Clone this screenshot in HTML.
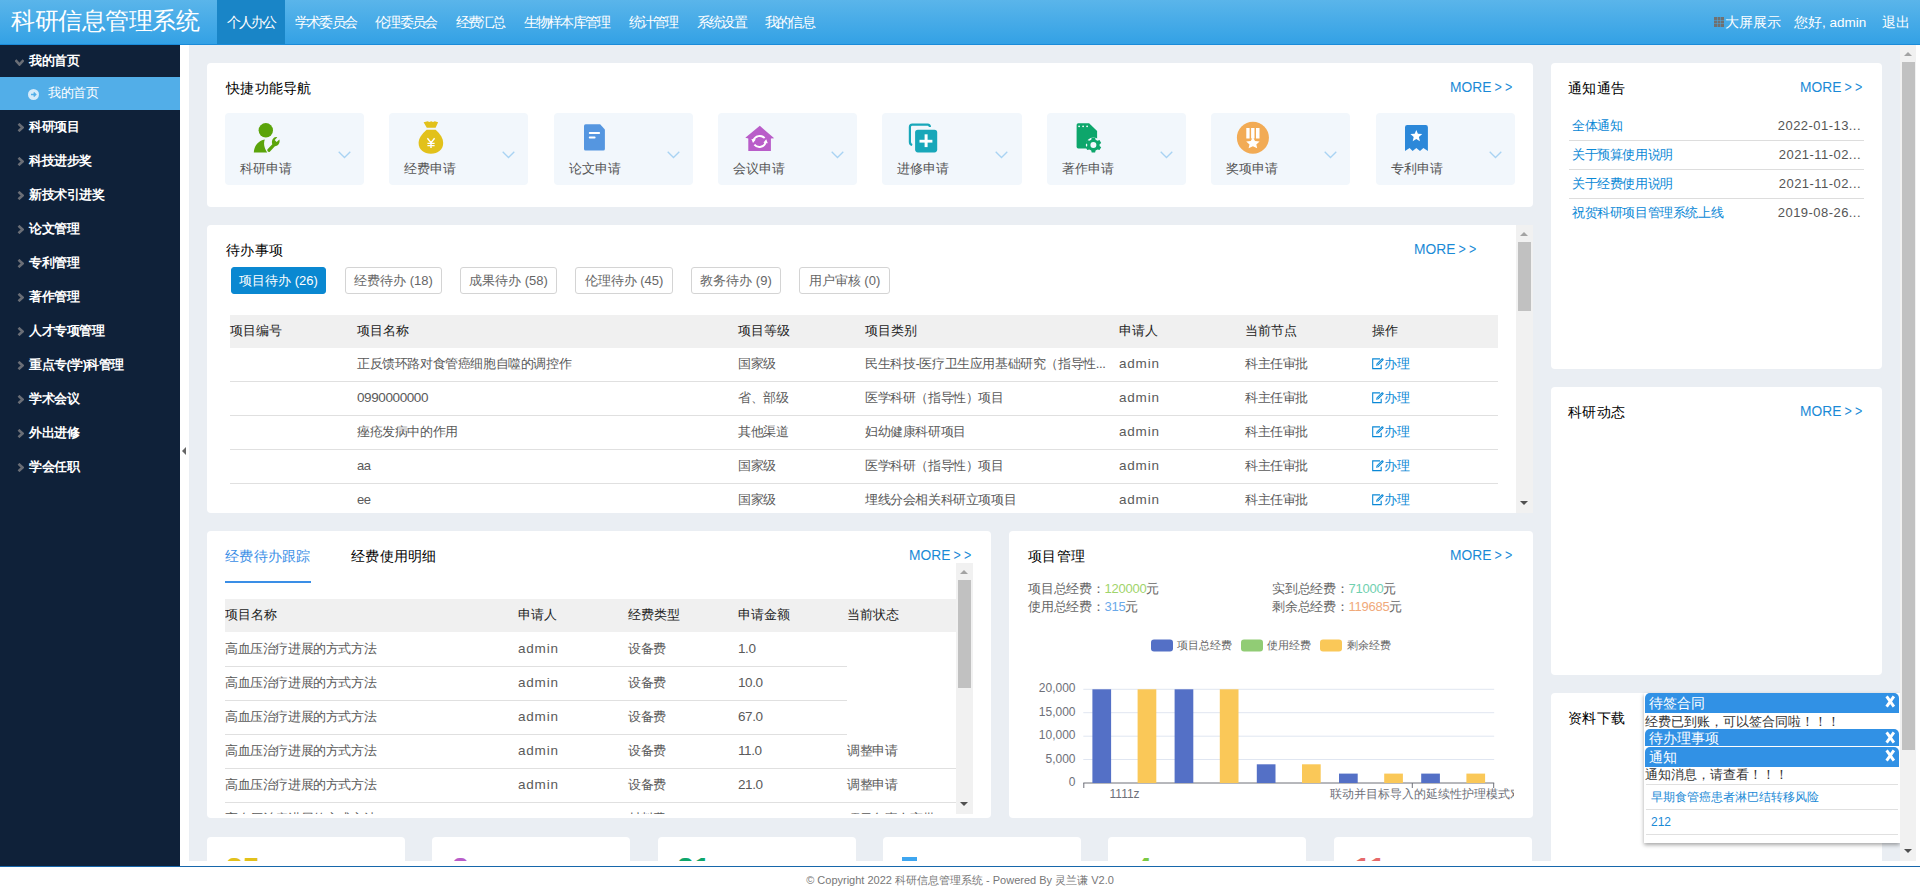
<!DOCTYPE html>
<html><head><meta charset="utf-8"><title>科研信息管理系统</title>
<style>
*{box-sizing:border-box;margin:0;padding:0}
html,body{width:1920px;height:896px;overflow:hidden;background:#fff;font-family:"Liberation Sans",sans-serif;font-size:13px;color:#333}
.abs{position:absolute}
#hd{position:absolute;left:0;top:0;width:1920px;height:45px;background:linear-gradient(#5ab5ea,#33a1e5);border-bottom:1px solid #1a8bd9}
#logo{position:absolute;left:11px;top:4px;font-size:24px;letter-spacing:-0.45px;line-height:34px;color:#fff;white-space:nowrap}
#nav{position:absolute;left:217px;top:0;height:44px;display:flex}
#nav div{height:44px;line-height:45px;padding:0 9.3px 0 9.6px;color:#fff;font-size:14px;letter-spacing:-1.7px;white-space:nowrap}
#nav div.on{background:#1985c7}
.hr{position:absolute;top:1px;height:44px;line-height:44px;color:#fff;font-size:13.5px;white-space:nowrap}
#side{position:absolute;left:0;top:45px;width:180px;height:821px;background:#0f2139}
.mi{position:absolute;left:0;width:180px;height:34px;line-height:34px;color:#fff;font-size:12.5px;letter-spacing:-0.5px;padding-left:29px;white-space:nowrap}
.mi .ar{position:absolute;left:17px;top:13px;width:7px;height:9px}
#main{position:absolute;left:180px;top:45px;width:1740px;height:816px;background:#fff;overflow:hidden}
#bg{position:absolute;left:9px;top:0;width:1711px;height:816px;background:#eaeef3}
.card{position:absolute;background:#fff;border-radius:4px;overflow:hidden}
.ttl{position:absolute;font-size:14px;color:#000;white-space:nowrap;line-height:20px;letter-spacing:0.3px}
.more{position:absolute;font-size:15.5px;color:#1a8ad6;white-space:nowrap;line-height:20px;transform:translateY(-1px) scaleX(0.89);transform-origin:0 0}
.more i{font-style:normal;margin-left:3.6px;font-size:14px}
#foot{position:absolute;left:0;top:866px;width:1920px;height:30px;border-top:1px solid #1767ab;text-align:center;font-size:11px;color:#777;line-height:27px}
.qn{position:absolute;top:113px;width:139.1px;height:72px;background:#f2f7fc;border-radius:4px}
.qi{position:absolute;width:50px;height:45px}
.qi svg{position:absolute;left:0;top:0;overflow:visible}
.qt{position:absolute;top:159px;font-size:13px;line-height:20px;color:#555;white-space:nowrap}
.qc{position:absolute;top:151px}
.btn{position:absolute;top:267px;height:27px;line-height:25px;border:1px solid #d4d4d4;border-radius:3px;color:#666;font-size:13px;text-align:center;white-space:nowrap;background:#fff}
.btn.on{background:#0a88d1;border-color:#0a88d1;color:#fff}
.th{position:absolute;height:33px;background:#f0f0f0}
.tht{position:absolute;font-size:13px;line-height:20px;color:#222;white-space:nowrap}
.td{position:absolute;font-size:13px;line-height:20px;color:#5a5a5a;white-space:nowrap;letter-spacing:-0.4px}
.lk{color:#0a88d6}
.ln{position:absolute;height:1px;background:#e0e0e0}
.sb{position:absolute;background:#f1f1f1}
.sbt{position:absolute;background:#c1c1c1}
.up{position:absolute;width:0;height:0;border-left:4.5px solid transparent;border-right:4.5px solid transparent;border-bottom:4.5px solid #a3a3a3}
.dn{position:absolute;width:0;height:0;border-left:4.5px solid transparent;border-right:4.5px solid transparent;border-top:4.5px solid #505050}
.st{position:absolute;font-size:13px;line-height:18px;color:#666;white-space:nowrap;letter-spacing:-0.25px}
.lg{font-size:11px;fill:#666;font-family:"Liberation Sans",sans-serif}
.ax{font-size:12px;fill:#6e7079;font-family:"Liberation Sans",sans-serif}
.bn{position:absolute;top:853px;font-size:30px;font-weight:bold;line-height:30px}
#pop{position:absolute;left:1644px;top:693px;width:256px;height:150px;background:#fff;box-shadow:0 2px 4px rgba(0,0,0,0.35)}
.ph{position:absolute;left:1px;width:254px;height:20px;background:#3191e5;border-radius:5px 5px 0 0;color:#fff;font-size:14px;line-height:21px;padding-left:4px;white-space:nowrap}
.px{position:absolute;left:240px;top:2.6px;overflow:visible}
.pb{position:absolute;left:1px;font-size:13px;line-height:17px;color:#333;white-space:nowrap}
.pl{position:absolute;left:7px;font-size:12px;line-height:20px;color:#1a8ad6;white-space:nowrap}
.L{font-size:13.5px}
.dt{letter-spacing:0.45px}
</style></head><body>
<div id="hd">
  <div id="logo">科研信息管理系统</div>
  <div id="nav"><div class="on">个人办公</div><div>学术委员会</div><div>伦理委员会</div><div>经费汇总</div><div>生物样本库管理</div><div>统计管理</div><div>系统设置</div><div>我的信息</div></div>
  <svg style="position:absolute;left:1714px;top:17px" width="10" height="10" viewBox="0 0 10 10"><g fill="#707070"><rect x="0" y="0" width="3" height="3"/><rect x="3.5" y="0" width="3" height="3"/><rect x="7" y="0" width="3" height="3"/><rect x="0" y="3.5" width="3" height="3"/><rect x="3.5" y="3.5" width="3" height="3"/><rect x="7" y="3.5" width="3" height="3"/><rect x="0" y="7" width="3" height="3"/><rect x="3.5" y="7" width="3" height="3"/><rect x="7" y="7" width="3" height="3"/></g></svg>
<div class="hr" style="left:1725px">大屏展示</div><div class="hr" style="left:1794px">您好, admin</div><div class="hr" style="left:1882px">退出</div>
</div>
<div id="side">
<div class="mi" style="top:0;height:32px;line-height:32px;font-weight:bold"><svg class="ar" style="left:15px;top:14px;width:9px;height:7px" viewBox="0 0 9 7"><path d="M0.5 1 L4.5 5.5 L8.5 1" fill="none" stroke="#6a6e76" stroke-width="2.6"/></svg>我的首页</div>
<div class="mi" style="top:32px;height:33px;line-height:33px;background:#52aee8;padding-left:48px"><svg style="position:absolute;left:28px;top:12px" width="11" height="11" viewBox="0 0 11 11"><circle cx="5.5" cy="5.5" r="5.5" fill="#d6ebfa"/><path d="M3 5.5 H7.5 M5.7 3.5 L7.7 5.5 L5.7 7.5" fill="none" stroke="#52aee8" stroke-width="1.5"/></svg>我的首页</div>
<div class="mi" style="top:65px;font-weight:bold"><svg class="ar" viewBox="0 0 7 9"><path d="M1.5 0.8 L5.5 4.5 L1.5 8.2" fill="none" stroke="#6a6e76" stroke-width="2.6"/></svg>科研项目</div>
<div class="mi" style="top:99px;font-weight:bold"><svg class="ar" viewBox="0 0 7 9"><path d="M1.5 0.8 L5.5 4.5 L1.5 8.2" fill="none" stroke="#6a6e76" stroke-width="2.6"/></svg>科技进步奖</div>
<div class="mi" style="top:133px;font-weight:bold"><svg class="ar" viewBox="0 0 7 9"><path d="M1.5 0.8 L5.5 4.5 L1.5 8.2" fill="none" stroke="#6a6e76" stroke-width="2.6"/></svg>新技术引进奖</div>
<div class="mi" style="top:167px;font-weight:bold"><svg class="ar" viewBox="0 0 7 9"><path d="M1.5 0.8 L5.5 4.5 L1.5 8.2" fill="none" stroke="#6a6e76" stroke-width="2.6"/></svg>论文管理</div>
<div class="mi" style="top:201px;font-weight:bold"><svg class="ar" viewBox="0 0 7 9"><path d="M1.5 0.8 L5.5 4.5 L1.5 8.2" fill="none" stroke="#6a6e76" stroke-width="2.6"/></svg>专利管理</div>
<div class="mi" style="top:235px;font-weight:bold"><svg class="ar" viewBox="0 0 7 9"><path d="M1.5 0.8 L5.5 4.5 L1.5 8.2" fill="none" stroke="#6a6e76" stroke-width="2.6"/></svg>著作管理</div>
<div class="mi" style="top:269px;font-weight:bold"><svg class="ar" viewBox="0 0 7 9"><path d="M1.5 0.8 L5.5 4.5 L1.5 8.2" fill="none" stroke="#6a6e76" stroke-width="2.6"/></svg>人才专项管理</div>
<div class="mi" style="top:303px;font-weight:bold"><svg class="ar" viewBox="0 0 7 9"><path d="M1.5 0.8 L5.5 4.5 L1.5 8.2" fill="none" stroke="#6a6e76" stroke-width="2.6"/></svg>重点专(学)科管理</div>
<div class="mi" style="top:337px;font-weight:bold"><svg class="ar" viewBox="0 0 7 9"><path d="M1.5 0.8 L5.5 4.5 L1.5 8.2" fill="none" stroke="#6a6e76" stroke-width="2.6"/></svg>学术会议</div>
<div class="mi" style="top:371px;font-weight:bold"><svg class="ar" viewBox="0 0 7 9"><path d="M1.5 0.8 L5.5 4.5 L1.5 8.2" fill="none" stroke="#6a6e76" stroke-width="2.6"/></svg>外出进修</div>
<div class="mi" style="top:405px;font-weight:bold"><svg class="ar" viewBox="0 0 7 9"><path d="M1.5 0.8 L5.5 4.5 L1.5 8.2" fill="none" stroke="#6a6e76" stroke-width="2.6"/></svg>学会任职</div>
</div>
<div id="main"><div id="bg"></div></div>
<div id="clip" style="position:absolute;left:0;top:0;width:1900px;height:861px;overflow:hidden">
<div class="card" style="left:207px;top:63px;width:1326px;height:144px"></div>
<div class="ttl" style="left:226px;top:78px">快捷功能导航</div><div class="more" style="left:1450px;top:78px">MORE<i>&gt;</i><i>&gt;</i></div>
<div class="qn" style="left:225.00px"></div><div class="qi" style="left:245px;top:115px"><svg width="50" height="45" viewBox="0 0 50 45"><circle cx="20.8" cy="15.3" r="7.2" fill="#5ba40b"/><path d="M8.8 37.4 C9.3 30.5 13.5 25.8 19.8 24.6 C18.2 28.6 19.3 33.8 22.2 37.4 Z" fill="#5ba40b"/><path d="M22.3 34.6 L27.3 29.2 C26.2 25.8 27.6 22.4 31.2 21.9 L32.3 22.2 L29.7 25.1 L31.6 27.1 L34.4 24.5 C35.3 28 33.3 31 29.9 31.2 L24.8 36.8 C23.7 37.8 21.9 36.2 22.3 34.6 Z" fill="#5ba40b"/></svg></div><div class="qt" style="left:240.00px">科研申请</div><svg class="qc" style="left:338.00px" width="13" height="8" viewBox="0 0 13 8"><path d="M0.7 0.7 L6.5 6.5 L12.3 0.7" fill="none" stroke="#a9d3f3" stroke-width="1.3"/></svg>
<div class="qn" style="left:389.37px"></div><div class="qi" style="left:405px;top:115px"><svg width="50" height="45" viewBox="0 0 50 45"><path d="M18.6 7.3 L20.8 6.8 L22.6 6.2 L24.4 6.9 L26.2 6.2 L28 6.9 L29.8 6.2 L31.4 6.8 L33.1 7.3 L30.6 12.8 L21.8 12.8 Z" fill="#e2c11b"/><path d="M21.6 14.8 L30.6 14.8 C35.5 19.2 38.2 23.5 38.2 28 C38.2 34.5 33 38.7 25.9 38.7 C18.8 38.7 13.6 34.5 13.6 28 C13.6 23.5 16.7 19.2 21.6 14.8 Z" fill="#e2c11b"/><path d="M22.4 23.2 L26 27.6 L29.6 23.2 M26 27.6 V33 M22.4 28.4 H29.6 M22.4 30.6 H29.6" fill="none" stroke="#fff" stroke-width="1.4"/></svg></div><div class="qt" style="left:404.37px">经费申请</div><svg class="qc" style="left:502.37px" width="13" height="8" viewBox="0 0 13 8"><path d="M0.7 0.7 L6.5 6.5 L12.3 0.7" fill="none" stroke="#a9d3f3" stroke-width="1.3"/></svg>
<div class="qn" style="left:553.74px"></div><div class="qi" style="left:570px;top:115px"><svg width="50" height="45" viewBox="0 0 50 45"><path d="M15.6 9.2 L30.1 9.2 L34.9 14.4 L34.9 34 Q34.9 35.6 33.3 35.6 L15.6 35.6 Q14 35.6 14 34 L14 10.8 Q14 9.2 15.6 9.2 Z" fill="#5596e0"/><rect x="18.8" y="17" width="11.3" height="1.9" rx="0.9" fill="#fff"/><rect x="18.8" y="21.6" width="6.8" height="1.9" rx="0.9" fill="#fff"/></svg></div><div class="qt" style="left:568.74px">论文申请</div><svg class="qc" style="left:666.74px" width="13" height="8" viewBox="0 0 13 8"><path d="M0.7 0.7 L6.5 6.5 L12.3 0.7" fill="none" stroke="#a9d3f3" stroke-width="1.3"/></svg>
<div class="qn" style="left:718.11px"></div><div class="qi" style="left:735px;top:115px"><svg width="50" height="45" viewBox="0 0 50 45"><path d="M24.8 10.8 L39.2 23.2 L35.9 23.6 L35.9 35.9 L13.3 35.9 L13.3 23.6 L10.3 22.8 Z" fill="#b95dc9"/><path d="M18.4 25.4 A6.6 6.6 0 0 1 29.6 23.2 M30.8 27 A6.6 6.6 0 0 1 19.4 29.6" fill="none" stroke="#fff" stroke-width="1.9"/><path d="M16.4 24 L20.8 24.4 L18 28 Z M32.8 28.2 L28.4 27.8 L31.2 24.2 Z" fill="#fff"/></svg></div><div class="qt" style="left:733.11px">会议申请</div><svg class="qc" style="left:831.11px" width="13" height="8" viewBox="0 0 13 8"><path d="M0.7 0.7 L6.5 6.5 L12.3 0.7" fill="none" stroke="#a9d3f3" stroke-width="1.3"/></svg>
<div class="qn" style="left:882.48px"></div><div class="qi" style="left:898px;top:115px"><svg width="50" height="45" viewBox="0 0 50 45"><path d="M14.2 30 Q11.9 29.4 11.9 27 L11.9 12 Q11.9 9.6 14.3 9.6 L29.6 9.6 Q31.9 9.6 31.9 12" fill="none" stroke="#18a7b9" stroke-width="2.2"/><rect x="17.1" y="14.8" width="22.1" height="22.6" rx="2.8" fill="#18a7b9"/><rect x="26.6" y="19.3" width="3" height="12.8" fill="#fff"/><rect x="21.5" y="24.8" width="12.9" height="2.8" fill="#fff"/></svg></div><div class="qt" style="left:897.48px">进修申请</div><svg class="qc" style="left:995.48px" width="13" height="8" viewBox="0 0 13 8"><path d="M0.7 0.7 L6.5 6.5 L12.3 0.7" fill="none" stroke="#a9d3f3" stroke-width="1.3"/></svg>
<div class="qn" style="left:1046.85px"></div><div class="qi" style="left:1063px;top:115px"><svg width="50" height="45" viewBox="0 0 50 45"><path d="M15.3 8.2 L26.1 8.2 L34.1 16 L34.1 33.4 L15.3 33.4 Q13.6 33.4 13.6 31.7 L13.6 9.9 Q13.6 8.2 15.3 8.2 Z" fill="#0da66b"/><circle cx="16.1" cy="11.3" r="0.9" fill="#fff"/><circle cx="20.1" cy="11.3" r="0.9" fill="#fff"/><circle cx="24.1" cy="11.3" r="0.9" fill="#fff"/><g transform="translate(30.4 30.1)"><circle r="7.6" fill="#f2f7fc"/><path d="M-1.7 -7.4 L1.7 -7.4 L2.2 -5.4 L4.1 -4.3 L6.1 -5 L7.8 -2.1 L6.2 -0.8 L6.2 0.8 L7.8 2.1 L6.1 5 L4.1 4.3 L2.2 5.4 L1.7 7.4 L-1.7 7.4 L-2.2 5.4 L-4.1 4.3 L-6.1 5 L-7.8 2.1 L-6.2 0.8 L-6.2 -0.8 L-7.8 -2.1 L-6.1 -5 L-4.1 -4.3 L-2.2 -5.4 Z" fill="#0da66b"/><circle r="3" fill="#f2f7fc"/></g></svg></div><div class="qt" style="left:1061.85px">著作申请</div><svg class="qc" style="left:1159.85px" width="13" height="8" viewBox="0 0 13 8"><path d="M0.7 0.7 L6.5 6.5 L12.3 0.7" fill="none" stroke="#a9d3f3" stroke-width="1.3"/></svg>
<div class="qn" style="left:1211.22px"></div><div class="qi" style="left:1227px;top:115px"><svg width="50" height="45" viewBox="0 0 50 45"><circle cx="25.9" cy="22.8" r="16" fill="#f2ab55"/><path d="M19.3 13 H22.6 V23.5 H19.3 Z M24.1 13 H27.5 V23.5 H24.1 Z M29 13 H32.5 V23.5 H29 Z" fill="#fff"/><path d="M25.9 22 L28 26 L32.6 26.6 L29.3 29.6 L30.2 33.3 L25.9 31.2 L21.6 33.3 L22.5 29.6 L19.2 26.6 L23.8 26 Z" fill="#fff"/></svg></div><div class="qt" style="left:1226.22px">奖项申请</div><svg class="qc" style="left:1324.22px" width="13" height="8" viewBox="0 0 13 8"><path d="M0.7 0.7 L6.5 6.5 L12.3 0.7" fill="none" stroke="#a9d3f3" stroke-width="1.3"/></svg>
<div class="qn" style="left:1375.59px"></div><div class="qi" style="left:1392px;top:115px"><svg width="50" height="45" viewBox="0 0 50 45"><path d="M13 12.2 Q13 10 15.2 10 L33.7 10 Q35.9 10 35.9 12.2 L35.9 35.9 L31.4 33.1 L28 35.9 L24.3 33.1 L20.6 35.9 L17.6 33.1 L13 35.9 Z" fill="#2c88d9"/><path d="M24.3 15 L25.9 18.7 L30.2 19 L26.9 21.9 L27.9 26.3 L24.3 24 L20.7 26.3 L21.7 21.9 L18.4 19 L22.7 18.7 Z" fill="#fff"/></svg></div><div class="qt" style="left:1390.59px">专利申请</div><svg class="qc" style="left:1488.59px" width="13" height="8" viewBox="0 0 13 8"><path d="M0.7 0.7 L6.5 6.5 L12.3 0.7" fill="none" stroke="#a9d3f3" stroke-width="1.3"/></svg>
<div class="card" style="left:207px;top:225px;width:1326px;height:288px"></div>
<div class="ttl" style="left:226px;top:240px">待办事项</div><div class="more" style="left:1414px;top:240px">MORE<i>&gt;</i><i>&gt;</i></div>
<div class="btn on" style="left:231px;width:95px">项目待办 (26)</div><div class="btn" style="left:345px;width:97px">经费待办 (18)</div><div class="btn" style="left:460px;width:97px">成果待办 (58)</div><div class="btn" style="left:575px;width:98px">伦理待办 (45)</div><div class="btn" style="left:691px;width:90px">教务待办 (9)</div><div class="btn" style="left:799px;width:91px">用户审核 (0)</div>
<div class="th" style="left:230px;top:315px;width:1268px"></div>
<div class="tht" style="left:230px;top:321px">项目编号</div><div class="tht" style="left:357px;top:321px">项目名称</div><div class="tht" style="left:738px;top:321px">项目等级</div><div class="tht" style="left:865px;top:321px">项目类别</div><div class="tht" style="left:1119px;top:321px">申请人</div><div class="tht" style="left:1245px;top:321px">当前节点</div><div class="tht" style="left:1372px;top:321px">操作</div>
<div class="td" style="left:357px;top:354px">正反馈环路对食管癌细胞自噬的调控作</div><div class="td" style="left:738px;top:354px">国家级</div><div class="td" style="left:865px;top:354px">民生科技-医疗卫生应用基础研究（指导性...</div><div class="td" style="left:1119px;top:354px"><span class="L" style="letter-spacing:0.8px">admin</span></div><div class="td" style="left:1245px;top:354px">科主任审批</div><div class="td lk" style="left:1372px;top:354px"><svg width="12" height="12" viewBox="0 0 12 12" style="position:relative;top:2px"><path d="M8 0.9 H0.7 V10.6 H9.2 V6.8" fill="none" stroke="#0a88d6" stroke-width="1.1"/><path d="M4 7.8 L4.6 5.6 L9.6 0.6 Q10.4 0 11 0.6 L11.4 1 Q12 1.6 11.4 2.3 L6.4 7.3 Z" fill="#0a88d6"/><path d="M5 6.8 L10 1.8" stroke="#fff" stroke-width="0.6"/></svg>办理</div><div class="ln" style="left:230px;top:381px;width:1268px"></div>
<div class="td" style="left:357px;top:388px"><span class="L">0990000000</span></div><div class="td" style="left:738px;top:388px">省、部级</div><div class="td" style="left:865px;top:388px">医学科研（指导性）项目</div><div class="td" style="left:1119px;top:388px"><span class="L" style="letter-spacing:0.8px">admin</span></div><div class="td" style="left:1245px;top:388px">科主任审批</div><div class="td lk" style="left:1372px;top:388px"><svg width="12" height="12" viewBox="0 0 12 12" style="position:relative;top:2px"><path d="M8 0.9 H0.7 V10.6 H9.2 V6.8" fill="none" stroke="#0a88d6" stroke-width="1.1"/><path d="M4 7.8 L4.6 5.6 L9.6 0.6 Q10.4 0 11 0.6 L11.4 1 Q12 1.6 11.4 2.3 L6.4 7.3 Z" fill="#0a88d6"/><path d="M5 6.8 L10 1.8" stroke="#fff" stroke-width="0.6"/></svg>办理</div><div class="ln" style="left:230px;top:415px;width:1268px"></div>
<div class="td" style="left:357px;top:422px">痤疮发病中的作用</div><div class="td" style="left:738px;top:422px">其他渠道</div><div class="td" style="left:865px;top:422px">妇幼健康科研项目</div><div class="td" style="left:1119px;top:422px"><span class="L" style="letter-spacing:0.8px">admin</span></div><div class="td" style="left:1245px;top:422px">科主任审批</div><div class="td lk" style="left:1372px;top:422px"><svg width="12" height="12" viewBox="0 0 12 12" style="position:relative;top:2px"><path d="M8 0.9 H0.7 V10.6 H9.2 V6.8" fill="none" stroke="#0a88d6" stroke-width="1.1"/><path d="M4 7.8 L4.6 5.6 L9.6 0.6 Q10.4 0 11 0.6 L11.4 1 Q12 1.6 11.4 2.3 L6.4 7.3 Z" fill="#0a88d6"/><path d="M5 6.8 L10 1.8" stroke="#fff" stroke-width="0.6"/></svg>办理</div><div class="ln" style="left:230px;top:449px;width:1268px"></div>
<div class="td" style="left:357px;top:456px">aa</div><div class="td" style="left:738px;top:456px">国家级</div><div class="td" style="left:865px;top:456px">医学科研（指导性）项目</div><div class="td" style="left:1119px;top:456px"><span class="L" style="letter-spacing:0.8px">admin</span></div><div class="td" style="left:1245px;top:456px">科主任审批</div><div class="td lk" style="left:1372px;top:456px"><svg width="12" height="12" viewBox="0 0 12 12" style="position:relative;top:2px"><path d="M8 0.9 H0.7 V10.6 H9.2 V6.8" fill="none" stroke="#0a88d6" stroke-width="1.1"/><path d="M4 7.8 L4.6 5.6 L9.6 0.6 Q10.4 0 11 0.6 L11.4 1 Q12 1.6 11.4 2.3 L6.4 7.3 Z" fill="#0a88d6"/><path d="M5 6.8 L10 1.8" stroke="#fff" stroke-width="0.6"/></svg>办理</div><div class="ln" style="left:230px;top:483px;width:1268px"></div>
<div class="td" style="left:357px;top:490px">ee</div><div class="td" style="left:738px;top:490px">国家级</div><div class="td" style="left:865px;top:490px">埋线分会相关科研立项项目</div><div class="td" style="left:1119px;top:490px"><span class="L" style="letter-spacing:0.8px">admin</span></div><div class="td" style="left:1245px;top:490px">科主任审批</div><div class="td lk" style="left:1372px;top:490px"><svg width="12" height="12" viewBox="0 0 12 12" style="position:relative;top:2px"><path d="M8 0.9 H0.7 V10.6 H9.2 V6.8" fill="none" stroke="#0a88d6" stroke-width="1.1"/><path d="M4 7.8 L4.6 5.6 L9.6 0.6 Q10.4 0 11 0.6 L11.4 1 Q12 1.6 11.4 2.3 L6.4 7.3 Z" fill="#0a88d6"/><path d="M5 6.8 L10 1.8" stroke="#fff" stroke-width="0.6"/></svg>办理</div>
<div class="sb" style="left:1516px;top:225px;width:17px;height:288px"><div class="sbt" style="left:2px;top:17px;width:13px;height:69px"></div><div class="up" style="left:4px;top:7px"></div><div class="dn" style="left:4px;top:276px"></div></div>
<div class="card" style="left:207px;top:531px;width:784px;height:287px"></div>
<div class="ttl" style="left:225px;top:546px;color:#3a8ee6">经费待办跟踪</div><div style="position:absolute;left:225px;top:581px;width:86px;height:2px;background:#3a8ee6"></div><div class="ttl" style="left:351px;top:546px">经费使用明细</div><div class="more" style="left:909px;top:546px">MORE<i>&gt;</i><i>&gt;</i></div>
<div style="position:absolute;left:225px;top:563px;width:748px;height:251px;overflow:hidden"><div class="th" style="left:0;top:36px;width:731px"></div><div class="tht" style="left:0px;top:42px">项目名称</div><div class="tht" style="left:293px;top:42px">申请人</div><div class="tht" style="left:403px;top:42px">经费类型</div><div class="tht" style="left:513px;top:42px">申请金额</div><div class="tht" style="left:622px;top:42px">当前状态</div><div class="td" style="left:0px;top:76px">高血压治疗进展的方式方法</div><div class="td" style="left:293px;top:76px"><span class="L" style="letter-spacing:0.8px">admin</span></div><div class="td" style="left:403px;top:76px">设备费</div><div class="td" style="left:513px;top:76px"><span class="L">1.0</span></div><div class="ln" style="left:0;top:103px;width:622px"></div><div class="td" style="left:0px;top:110px">高血压治疗进展的方式方法</div><div class="td" style="left:293px;top:110px"><span class="L" style="letter-spacing:0.8px">admin</span></div><div class="td" style="left:403px;top:110px">设备费</div><div class="td" style="left:513px;top:110px"><span class="L">10.0</span></div><div class="ln" style="left:0;top:137px;width:622px"></div><div class="td" style="left:0px;top:144px">高血压治疗进展的方式方法</div><div class="td" style="left:293px;top:144px"><span class="L" style="letter-spacing:0.8px">admin</span></div><div class="td" style="left:403px;top:144px">设备费</div><div class="td" style="left:513px;top:144px"><span class="L">67.0</span></div><div class="ln" style="left:0;top:171px;width:622px"></div><div class="td" style="left:0px;top:178px">高血压治疗进展的方式方法</div><div class="td" style="left:293px;top:178px"><span class="L" style="letter-spacing:0.8px">admin</span></div><div class="td" style="left:403px;top:178px">设备费</div><div class="td" style="left:513px;top:178px"><span class="L">11.0</span></div><div class="td" style="left:622px;top:178px">调整申请</div><div class="ln" style="left:0;top:205px;width:731px"></div><div class="td" style="left:0px;top:212px">高血压治疗进展的方式方法</div><div class="td" style="left:293px;top:212px"><span class="L" style="letter-spacing:0.8px">admin</span></div><div class="td" style="left:403px;top:212px">设备费</div><div class="td" style="left:513px;top:212px"><span class="L">21.0</span></div><div class="td" style="left:622px;top:212px">调整申请</div><div class="ln" style="left:0;top:239px;width:731px"></div><div class="td" style="left:0px;top:246px">高血压治疗进展的方式方法</div><div class="td" style="left:293px;top:246px"><span class="L" style="letter-spacing:0.8px">admin</span></div><div class="td" style="left:403px;top:246px">材料费</div><div class="td" style="left:513px;top:246px"><span class="L">33.0</span></div><div class="td" style="left:622px;top:246px">项目负责人审批</div><div class="ln" style="left:0;top:273px;width:731px"></div><div class="sb" style="left:731px;top:0;width:17px;height:251px"><div class="sbt" style="left:2px;top:17px;width:13px;height:108px"></div><div class="up" style="left:4px;top:7px"></div><div class="dn" style="left:4px;top:239px"></div></div></div>
<div class="card" style="left:1009px;top:531px;width:524px;height:287px"></div>
<div class="ttl" style="left:1028px;top:546px">项目管理</div><div class="more" style="left:1450px;top:546px">MORE<i>&gt;</i><i>&gt;</i></div>
<div class="st" style="left:1028px;top:580px">项目总经费：<span style="color:#9fd46b">120000</span>元</div><div class="st" style="left:1028px;top:598px">使用总经费：<span style="color:#6aa9e9">315</span>元</div><div class="st" style="left:1272px;top:580px">实到总经费：<span style="color:#70d0af">71000</span>元</div><div class="st" style="left:1272px;top:598px">剩余总经费：<span style="color:#f0a97a">119685</span>元</div>
<div style="position:absolute;left:1009px;top:531px;width:505px;height:287px;overflow:hidden"><svg style="position:absolute;left:0;top:89px" width="524" height="198" viewBox="1009 620 524 198"><rect x="1151" y="639.6" width="22" height="12" rx="3" fill="#5470c6"/><text x="1177" y="648.5" class="lg">项目总经费</text><rect x="1241" y="639.6" width="22" height="12" rx="3" fill="#91cc75"/><text x="1267" y="648.5" class="lg">使用经费</text><rect x="1320" y="639.6" width="22" height="12" rx="3" fill="#fac858"/><text x="1347" y="648.5" class="lg">剩余经费</text><line x1="1083.3" x2="1494.2" y1="689.3" y2="689.3" stroke="#e0e6f1" stroke-width="1"/><line x1="1083.3" x2="1494.2" y1="712.7" y2="712.7" stroke="#e0e6f1" stroke-width="1"/><line x1="1083.3" x2="1494.2" y1="736.2" y2="736.2" stroke="#e0e6f1" stroke-width="1"/><line x1="1083.3" x2="1494.2" y1="759.5" y2="759.5" stroke="#e0e6f1" stroke-width="1"/><text x="1075.5" y="692.3" class="ax" text-anchor="end">20,000</text><text x="1075.5" y="715.7" class="ax" text-anchor="end">15,000</text><text x="1075.5" y="739.2" class="ax" text-anchor="end">10,000</text><text x="1075.5" y="762.5" class="ax" text-anchor="end">5,000</text><text x="1075.5" y="786.0" class="ax" text-anchor="end">0</text><line x1="1083.3" x2="1494.2" y1="783" y2="783" stroke="#6e7079" stroke-width="1"/><line x1="1083.8" x2="1083.8" y1="783" y2="788" stroke="#6e7079" stroke-width="1"/><line x1="1412.3" x2="1412.3" y1="783" y2="788" stroke="#6e7079" stroke-width="1"/><line x1="1493.7" x2="1493.7" y1="783" y2="788" stroke="#6e7079" stroke-width="1"/><rect x="1092.4" y="689.3" width="18.7" height="93.7" fill="#5470c6"/><rect x="1137.6" y="689.3" width="18.7" height="93.7" fill="#fac858"/><rect x="1174.6" y="689.3" width="18.7" height="93.7" fill="#5470c6"/><rect x="1219.8" y="689.3" width="18.7" height="93.7" fill="#fac858"/><rect x="1256.8" y="764.3" width="18.7" height="18.7" fill="#5470c6"/><rect x="1302.0" y="764.3" width="18.7" height="18.7" fill="#fac858"/><rect x="1339.0" y="773.6" width="18.7" height="9.4" fill="#5470c6"/><rect x="1384.2" y="773.6" width="18.7" height="9.4" fill="#fac858"/><rect x="1421.2" y="773.6" width="18.7" height="9.4" fill="#5470c6"/><rect x="1466.4" y="773.6" width="18.7" height="9.4" fill="#fac858"/><text x="1124.6" y="798" class="ax" text-anchor="middle">1111z</text><text x="1329.5" y="798" class="ax">联动并目标导入的延续性护理模式对高血压</text></svg>
</div>
<div class="card" style="left:1551px;top:63px;width:331px;height:306px"></div>
<div class="ttl" style="left:1568px;top:78px">通知通告</div><div class="more" style="left:1800px;top:78px">MORE<i>&gt;</i><i>&gt;</i></div>
<div class="td lk" style="left:1572px;top:116px">全体通知</div><div class="td dt" style="left:1700px;width:161px;text-align:right;top:116px;color:#555">2022-01-13...</div><div class="ln" style="left:1569px;top:140px;width:295px;background:#ddd"></div><div class="td lk" style="left:1572px;top:145px">关于预算使用说明</div><div class="td dt" style="left:1700px;width:161px;text-align:right;top:145px;color:#555">2021-11-02...</div><div class="ln" style="left:1569px;top:169px;width:295px;background:#ddd"></div><div class="td lk" style="left:1572px;top:174px">关于经费使用说明</div><div class="td dt" style="left:1700px;width:161px;text-align:right;top:174px;color:#555">2021-11-02...</div><div class="ln" style="left:1569px;top:198px;width:295px;background:#ddd"></div><div class="td lk" style="left:1572px;top:203px">祝贺科研项目管理系统上线</div><div class="td dt" style="left:1700px;width:161px;text-align:right;top:203px;color:#555">2019-08-26...</div>
<div class="card" style="left:1551px;top:387px;width:331px;height:288px"></div>
<div class="ttl" style="left:1568px;top:402px">科研动态</div><div class="more" style="left:1800px;top:402px">MORE<i>&gt;</i><i>&gt;</i></div>
<div class="card" style="left:1551px;top:693px;width:331px;height:300px"></div>
<div class="ttl" style="left:1568px;top:708px">资料下载</div>
<div class="card" style="left:207.0px;top:837px;width:198px;height:100px"></div><div class="card" style="left:431.5px;top:837px;width:198px;height:100px"></div><div class="card" style="left:658.0px;top:837px;width:198px;height:100px"></div><div class="card" style="left:883.0px;top:837px;width:198px;height:100px"></div><div class="card" style="left:1108.0px;top:837px;width:198px;height:100px"></div><div class="card" style="left:1334.0px;top:837px;width:198px;height:100px"></div><div class="bn" style="left:226px;color:#e2c11b">35</div><div class="bn" style="left:452px;color:#b95dc9">2</div><div class="bn" style="left:677px;color:#0da66b">21</div><div style="position:absolute;left:902px;top:857px;width:15px;height:4px;background:#3ea6f0"></div><div class="bn" style="left:1135px;color:#7ac943">4</div><div class="bn" style="left:1354px;color:#e66a6a">11</div>
<!--CARDS-->
</div>
<div id="pop">
<div class="ph" style="top:0">待签合同<svg class="px" width="11" height="11" viewBox="0 0 11 11"><path d="M1.6 0.3 L8.9 10.7 M8.9 0.3 L1.6 10.7" stroke="#fff" stroke-width="2.9"/></svg></div>
<div class="pb" style="top:20px">经费已到账，可以签合同啦！！！</div>
<div class="ph" style="top:36px;height:17px;line-height:19px;overflow:hidden">待办理事项<svg class="px" width="11" height="11" viewBox="0 0 11 11"><path d="M1.6 0.3 L8.9 10.7 M8.9 0.3 L1.6 10.7" stroke="#fff" stroke-width="2.9"/></svg></div>
<div class="ph" style="top:54px">通知<svg class="px" width="11" height="11" viewBox="0 0 11 11"><path d="M1.6 0.3 L8.9 10.7 M8.9 0.3 L1.6 10.7" stroke="#fff" stroke-width="2.9"/></svg></div>
<div class="pb" style="top:73px">通知消息，请查看！！！</div>
<div class="ln" style="left:2px;top:91px;width:252px"></div>
<div class="pl" style="top:94px">早期食管癌患者淋巴结转移风险</div>
<div class="ln" style="left:2px;top:116px;width:252px"></div>
<div class="pl" style="top:119px">212</div>
<div class="ln" style="left:2px;top:141px;width:252px"></div>
</div>
<div class="sb" style="left:1900px;top:45px;width:16px;height:816px"><div class="sbt" style="left:2px;top:17px;width:13px;height:688px"></div><div class="up" style="left:3.5px;top:7px"></div><div class="dn" style="left:3.5px;top:804px"></div></div>
<div style="position:absolute;left:182px;top:447px;width:0;height:0;border-top:4px solid transparent;border-bottom:4px solid transparent;border-right:4.5px solid #666"></div>


<div id="foot">© Copyright 2022 科研信息管理系统 - Powered By 灵兰谦 V2.0</div>
</body></html>
